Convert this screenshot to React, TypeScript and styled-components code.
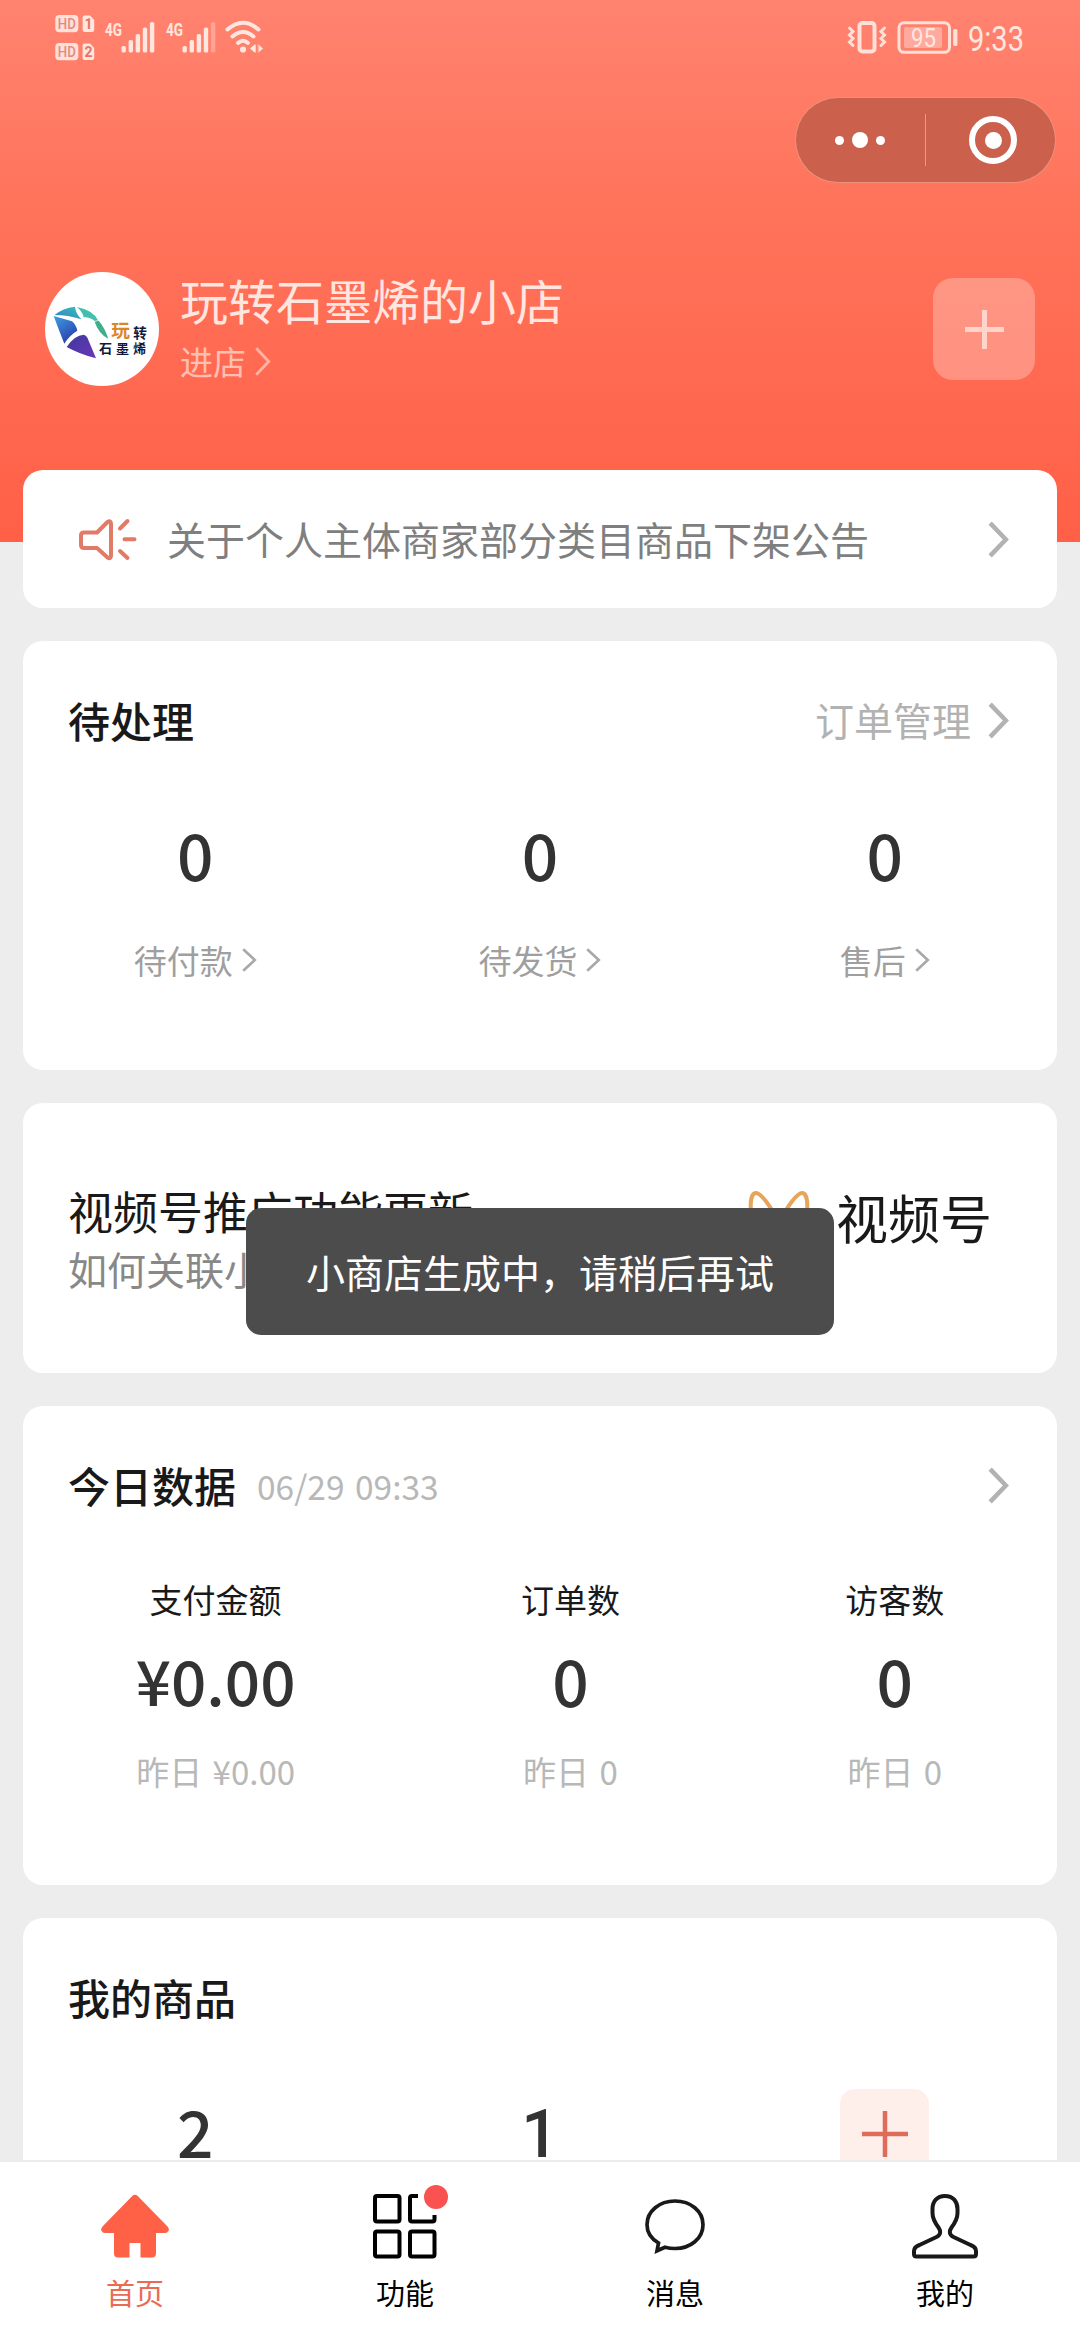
import React from "react";
import styled, { createGlobalStyle } from "styled-components";

const FONT = `"Noto Sans CJK SC", "Noto Sans", sans-serif`;

const GlobalStyle = createGlobalStyle`
  * { box-sizing: border-box; }
  body { margin: 0; background: #ededed; font-family: ${FONT}; }
  svg { display: block; flex: none; }
`;

const Screen = styled.div`
  position: relative;
  display: flex;
  flex-direction: column;
  width: 1080px;
  height: 2340px;
  overflow: hidden;
  background: #ededed;
`;

const Scroll = styled.main`
  flex: 1;
  min-height: 0;
  overflow: hidden;
`;

const Header = styled.header`
  height: 542px;
  background: linear-gradient(180deg, #ff8370 0%, #ff745b 37%, #ff6d55 58%, #ff6047 100%);
`;

const StatusBar = styled.div`
  display: flex;
  justify-content: space-between;
  height: 97px;
  padding: 12px 53px 0 55px;
`;

const CapsuleRow = styled.div`
  display: flex;
  justify-content: flex-end;
  padding-right: 24px;
`;

const Capsule = styled.div`
  display: flex;
  align-items: center;
  width: 261px;
  height: 86px;
  border: 1.5px solid rgba(255, 170, 150, 0.65);
  border-radius: 43px;
  background: #cb604c;
`;

const CapsuleHalf = styled.div`
  display: flex;
  flex: 1;
  align-items: center;
  justify-content: center;
`;

const CapsuleDivider = styled.div`
  width: 1px;
  height: 52px;
  background: rgba(255, 190, 175, 0.6);
`;

const Dots = styled.div`
  display: flex;
  align-items: center;
  gap: 8px;
  margin-right: 2px;
`;

const Dot = styled.i<{ $size: number }>`
  width: ${(p) => p.$size}px;
  height: ${(p) => p.$size}px;
  border-radius: 50%;
  background: #fff;
`;

const Ring = styled.div`
  display: flex;
  align-items: center;
  justify-content: center;
  width: 48px;
  height: 48px;
  margin-left: 5px;
  border: 6.5px solid #fff;
  border-radius: 50%;
`;

const Profile = styled.section`
  display: flex;
  align-items: center;
  height: 114px;
  margin-top: 89px;
  padding: 0 45px;
`;

const ShopText = styled.div`
  flex: 1;
  margin-left: 21px;
`;

const ShopName = styled.h1`
  margin: 0;
  color: #ffe6e0;
  font-size: 48px;
  font-weight: 400;
  line-height: 64px;
`;

const EnterShop = styled.div`
  display: flex;
  align-items: center;
  gap: 9px;
  color: #ffc0b2;
  font-size: 33px;
  line-height: 60px;
`;

const AddButton = styled.button<{ $size: number; $bg: string; $radius: number }>`
  display: flex;
  align-items: center;
  justify-content: center;
  width: ${(p) => p.$size}px;
  height: ${(p) => p.$size}px;
  padding: 0;
  border: 0;
  border-radius: ${(p) => p.$radius}px;
  background: ${(p) => p.$bg};
`;

const Cards = styled.div`
  display: flex;
  flex-direction: column;
  gap: 33px;
  margin-top: -72px;
  padding: 0 23px;
`;

const Card = styled.section<{ $height: number }>`
  flex: none;
  height: ${(p) => p.$height}px;
  border-radius: 20px;
  background: #fff;
`;

const Notice = styled(Card)`
  display: flex;
  align-items: center;
  padding: 0 48px 0 55px;
`;

const NoticeText = styled.div`
  flex: 1;
  margin: -3px 0 0 30px;
  color: #7f7f7f;
  font-size: 39px;
  line-height: 56px;
`;

const CardHead = styled.div`
  display: flex;
  align-items: center;
  height: 157px;
  padding: 0 48px 0 45px;
`;

const CardTitle = styled.h2`
  margin: 0;
  color: #191919;
  font-size: 42px;
  font-weight: 500;
  line-height: 60px;
`;

const DateText = styled.span`
  margin: 2px 0 0 21px;
  color: #b8b8b8;
  font-size: 33.5px;
  line-height: 60px;
  word-spacing: 3px;
`;

const HeadLink = styled.div`
  display: flex;
  align-items: center;
  gap: 17px;
  margin-left: auto;
  padding-top: 2px;
  color: #b2b2b2;
  font-size: 39px;
  line-height: 60px;
`;

const LinkText = styled.span`
  margin-top: -4px;
`;

const Thirds = styled.div<{ $top: number }>`
  display: grid;
  grid-template-columns: repeat(3, 1fr);
  justify-items: center;
  padding-top: ${(p) => p.$top}px;
`;

const Stat = styled.div`
  display: flex;
  flex-direction: column;
  align-items: center;
`;

const Num = styled.div<{ $size?: number; $line?: number; $plain?: boolean }>`
  color: #333;
  font-family: ${(p) => (p.$plain ? "Roboto, sans-serif" : FONT)};
  font-size: ${(p) => p.$size ?? 64}px;
  font-weight: 500;
  line-height: ${(p) => p.$line ?? 76}px;
`;

const StatLink = styled.div`
  display: flex;
  align-items: center;
  gap: 9px;
  margin-top: 49px;
  color: #9f9f9f;
  font-size: 33px;
  line-height: 40px;
`;

const Promo = styled(Card)`
  display: flex;
  align-items: center;
  justify-content: space-between;
  padding: 0 65px 0 45px;
`;

const PromoTitle = styled.div`
  color: #191919;
  font-size: 45px;
  line-height: 60px;
`;

const PromoSub = styled.div`
  color: #888;
  font-size: 39px;
  line-height: 54px;
`;

const Channels = styled.div`
  display: flex;
  align-items: center;
  gap: 26px;
  margin-bottom: 43px;
  color: #191919;
  font-size: 52px;
  line-height: 60px;
`;

const DataRow = styled.div`
  display: flex;
  justify-content: space-around;
  padding-top: 16px;
`;

const StatLabel = styled.div`
  color: #191919;
  font-size: 33px;
  line-height: 40px;
`;

const DataNum = styled(Num)`
  margin-top: 22px;
`;

const Yesterday = styled.div`
  margin-top: 34px;
  color: #b8b8b8;
  font-size: 33px;
  line-height: 40px;
  word-spacing: 3px;
`;

const Toast = styled.div`
  position: absolute;
  top: 1208px;
  left: 246px;
  width: 588px;
  height: 127px;
  border-radius: 15px;
  background: #4c4c4c;
  color: #fff;
  font-size: 39px;
  line-height: 126px;
  text-align: center;
  white-space: nowrap;
`;

const TabBar = styled.nav`
  display: flex;
  flex: none;
  height: 180px;
  border-top: 2px solid #ececec;
  background: #fff;
`;

const Tab = styled.div<{ $active?: boolean }>`
  display: flex;
  flex: 1;
  flex-direction: column;
  align-items: center;
  padding-top: 28px;
  color: ${(p) => (p.$active ? "#ea6a53" : "#000")};
  font-size: 29px;
  line-height: 40px;
  gap: 12px;
`;

const BadgedIcon = styled.div`
  position: relative;
`;

const Badge = styled.i`
  position: absolute;
  top: -5px;
  right: 2px;
  width: 24px;
  height: 24px;
  border-radius: 50%;
  background: #fa5151;
`;

function Chevron({ w = 21, h = 37, stroke = 4.5, color = "#b2b2b2" }) {
  const s = stroke / 2 + 0.5;
  return (
    <svg width={w} height={h} viewBox={`0 0 ${w} ${h}`} fill="none" stroke={color} strokeWidth={stroke}>
      <path d={`M${s - 0.6} ${s - 0.6}L${w - s - 0.4} ${h / 2}L${s - 0.6} ${h - s + 0.6}`} />
    </svg>
  );
}

function Plus({ size, stroke, color }: { size: number; stroke: number; color: string }) {
  const c = size / 2;
  return (
    <svg width={size} height={size} viewBox={`0 0 ${size} ${size}`} stroke={color} strokeWidth={stroke}>
      <path d={`M0 ${c}H${size}M${c} 0V${size}`} />
    </svg>
  );
}

function Signal({ x, weak }: { x: number; weak?: boolean }) {
  const tops = [34, 28, 22, 15.5, 10];
  return (
    <g fill="#ffe6df">
      <text x={x} y={23.5} fontSize={19} fontWeight={700} fontFamily="Roboto, sans-serif" textLength={17} lengthAdjust="spacingAndGlyphs">
        4G
      </text>
      {tops.map((t, i) => (
        <rect key={i} x={x + 16.5 + i * 7.1} y={t} width={4.4} height={40.5 - t} rx={1.6} opacity={weak && i === 4 ? 0.35 : 1} />
      ))}
    </g>
  );
}

function LeftIndicators() {
  return (
    <svg width={220} height={52} viewBox="0 0 220 52" fontFamily="Roboto, sans-serif">
      {[0, 1].map((i) => (
        <g key={i} transform={`translate(0 ${i * 28})`}>
          <rect x={0.3} y={3} width={23} height={17.3} rx={4} fill="#ffe0da" />
          <text x={2.8} y={16.6} fontSize={14} fontWeight={500} fill="#e58b7c" textLength={18} lengthAdjust="spacingAndGlyphs">
            HD
          </text>
          <path d="M29.600 3.500h5.400l4.200 4.600v10a2 2 0 0 1-2 2h-7.600a2 2 0 0 1-2-2v-12.600a2 2 0 0 1 2-2z" fill="#ffe6df" />
          <text x={33.4} y={17} fontSize={14} fontWeight={700} fill="#e8735f" textAnchor="middle">
            {i + 1}
          </text>
        </g>
      ))}
      <Signal x={50} />
      <Signal x={111} weak />
      <g fill="none" stroke="#ffe6df" strokeWidth={4} strokeLinecap="round">
        <path d="M172.500 17.500Q188 4 203.500 17.500" />
        <path d="M177.500 24.500Q188 15.500 198.500 24.500" />
        <path d="M183 31Q188 26.500 193 31" />
      </g>
      <circle cx={188} cy={37.5} r={3.1} fill="#ffe6df" />
      <path d="M195 36.500l4.500-4v8zM208 36.500l-4.500-4v8zM199.500 32.500h1.200v8h-1.200zM202.800 32.500h1.200v8h-1.200z" fill="#ffe6df" />
    </svg>
  );
}

function RightIndicators() {
  return (
    <svg width={180} height={52} viewBox="847 12 180 52" fill="none" stroke="#ffe0d8" fontFamily="Roboto, sans-serif">
      <rect x={859.5} y={23} width={15} height={28.5} rx={3} strokeWidth={4} />
      <path
        d="M849.500 28l3.500 3.500-3.500 3.500 3.500 3.500-3.500 3.500 3.500 3.500M884.500 28l-3.500 3.500 3.500 3.500-3.500 3.500 3.500 3.500-3.500 3.500"
        strokeWidth={3}
        strokeLinecap="round"
      />
      <rect x={899} y={22.8} width={50.5} height={29.5} rx={5} strokeWidth={3} />
      <rect x={904} y={27} width={38} height={21} rx={2} fill="#ffaa9e" stroke="none" />
      <rect x={953.2} y={29} width={4.2} height={17} rx={1.5} fill="#ffe0d8" stroke="none" />
      <text x={911} y={46.5} fontSize={26} fill="#ffe6df" stroke="none" textLength={25} lengthAdjust="spacingAndGlyphs">
        95
      </text>
      <text x={968} y={51.2} fontSize={35.5} fill="#ffe6df" stroke="none" textLength={56} lengthAdjust="spacingAndGlyphs">
        9:33
      </text>
    </svg>
  );
}

function Avatar() {
  return (
    <svg width={114} height={114} viewBox="15 18 342 342" fontFamily={FONT}>
      <defs>
        <linearGradient id="teal" x1="0" x2="1" y1="1" y2="0">
          <stop offset="0" stopColor="#2f7fc0" />
          <stop offset="1" stopColor="#3cc0bd" />
        </linearGradient>
        <linearGradient id="blue" x1="0" x2="0.6" y1="0" y2="1">
          <stop offset="0" stopColor="#3d9fe0" />
          <stop offset="1" stopColor="#2b3fae" />
        </linearGradient>
        <linearGradient id="violet" x1="0" x2="1" y1="0" y2="1">
          <stop offset="0" stopColor="#3f3a9c" />
          <stop offset="1" stopColor="#6a35b8" />
        </linearGradient>
      </defs>
      <circle cx={186} cy={189} r={171} fill="#fff" />
      <path d="M44 147Q68 126 105 122Q107 142 124 160Q84 147 44 147z" fill="url(#teal)" />
      <path d="M111 123Q160 133 174 163L164 165Q148 152 131 154Q128 138 111 123z" fill="#43bfae" />
      <path d="M164 167L176 164Q194 184 205 218Q176 204 164 167z" fill="#3fae8a" />
      <path d="M41 150L96 166Q108 176 112 194Q88 208 73 233Q58 196 41 150z" fill="url(#blue)" />
      <path d="M80 243Q104 207 131 206Q142 210 145 222L168 277Q120 265 80 243z" fill="url(#violet)" />
      <text x={214} y={214} fontSize={56} fontWeight={700} fill="#dc8428">玩</text>
      <text x={280} y={216} fontSize={41} fontWeight={700} fill="#10193c">转</text>
      <text x={177} y={262} fontSize={39} fontWeight={700} fill="#10193c" letterSpacing={12}>石墨烯</text>
    </svg>
  );
}

function Megaphone() {
  return (
    <svg width={59} height={46} viewBox="78 515.500 59 46" fill="none" stroke="#e27a68" strokeWidth={4} strokeLinecap="round" strokeLinejoin="round">
      <path d="M84 532H97L107.500 521.500Q111 519.500 111 523.500V555Q111 559 107.500 557L97 547.500H84Q81 547.500 81 544.500V535Q81 532 84 532z" />
      <path d="M120 528L127.500 520.500M124.500 538.800H134.500M120 550.500L127.500 557.500" />
    </svg>
  );
}

function Butterfly() {
  return (
    <svg width={62} height={54} viewBox="0 0 62 54" fill="none" stroke="#e6a55a" strokeWidth={4} strokeLinejoin="round">
      <path d="M31 33C23 17 13 2.500 7.500 3C1 4 1 26 8 37C13 45 24 43 31 33C38 43 49 45 54 37C61 26 61 4 54.500 3C49 2.500 39 17 31 33z" />
    </svg>
  );
}

function HomeIcon() {
  return (
    <svg width={70} height={70} viewBox="0 0 70 70" fill="#ff6147">
      <path d="M32.500 5.800Q35 3.600 37.500 5.800L67.500 36.500Q70 39.500 68 41.500Q67 43 64.500 43H56V63.500Q56 67.500 52 67.500H40.500V53H29.500V67.500H18Q14 67.500 14 63.500V43H5.500Q3 43 2 41.500Q0 39.500 2.500 36.500z" />
    </svg>
  );
}

function GridIcon() {
  return (
    <svg width={90} height={70} viewBox="0 0 90 70" fill="none" stroke="#000" strokeWidth={4}>
      <rect x={15} y={6} width={24.5} height={25.5} rx={2} />
      <rect x={15} y={41.5} width={24.5} height={25} rx={2} />
      <rect x={50} y={41.5} width={24.5} height={25} rx={2} />
      <path d="M58 6H52Q50 6 50 8V29.500Q50 31.500 52 31.500H72.500Q74.500 31.500 74.500 29.500V25" />
    </svg>
  );
}

function ChatIcon() {
  return (
    <svg width={70} height={70} viewBox="0 0 70 70" fill="none" stroke="#191919" strokeWidth={3.7} strokeLinejoin="miter">
      <path d="M18.500 53C11 48.500 7 42 7 34.700C7 21 19.500 11 35 11S63 21 63 34.700S50.500 58.500 35 58.500C31.500 58.500 28 58 25 57.200L17 60.800z" />
    </svg>
  );
}

function UserIcon() {
  return (
    <svg width={70} height={70} viewBox="0 0 70 70" fill="none" stroke="#191919" strokeWidth={4} strokeLinejoin="round">
      <path d="M35 6C27 6 22.500 11.500 22.500 19V23C22.500 29 25.500 33.500 28.500 37.500C31 41 31 45 26.500 47L9.500 55Q4 57 4 61V64Q4 66.500 6.500 66.500H63.500Q66 66.500 66 64V61Q66 57 60.500 55L43.500 47C39 45 39 41 41.500 37.500C44.500 33.500 47.500 29 47.500 23V19C47.500 11.500 43 6 35 6z" />
    </svg>
  );
}

const pending = ["待付款", "待发货", "售后"];

const today = [
  { label: "支付金额", value: "¥0.00", prev: "昨日 ¥0.00", size: 62 },
  { label: "订单数", value: "0", prev: "昨日 0", size: 64 },
  { label: "访客数", value: "0", prev: "昨日 0", size: 64 },
];

export default function App() {
  return (
    <Screen>
      <GlobalStyle />
      <Scroll>
        <Header>
          <StatusBar>
            <LeftIndicators />
            <RightIndicators />
          </StatusBar>
          <CapsuleRow>
            <Capsule>
              <CapsuleHalf>
                <Dots>
                  <Dot $size={9} />
                  <Dot $size={16} />
                  <Dot $size={9} />
                </Dots>
              </CapsuleHalf>
              <CapsuleDivider />
              <CapsuleHalf>
                <Ring>
                  <Dot $size={17} />
                </Ring>
              </CapsuleHalf>
            </Capsule>
          </CapsuleRow>
          <Profile>
            <Avatar />
            <ShopText>
              <ShopName>玩转石墨烯的小店</ShopName>
              <EnterShop>
                进店
                <Chevron w={16} h={29} stroke={2.8} color="#ffb3a4" />
              </EnterShop>
            </ShopText>
            <AddButton $size={102} $radius={20} $bg="rgba(255, 255, 255, 0.27)">
              <Plus size={39} stroke={5} color="#ffd5cb" />
            </AddButton>
          </Profile>
        </Header>

        <Cards>
          <Notice $height={138}>
            <Megaphone />
            <NoticeText>关于个人主体商家部分类目商品下架公告</NoticeText>
            <Chevron />
          </Notice>

          <Card $height={429}>
            <CardHead>
              <CardTitle>待处理</CardTitle>
              <HeadLink>
                <LinkText>订单管理</LinkText>
                <Chevron />
              </HeadLink>
            </CardHead>
            <Thirds $top={17}>
              {pending.map((label) => (
                <Stat key={label}>
                  <Num>0</Num>
                  <StatLink>
                    {label}
                    <Chevron w={15} h={24} stroke={2.6} color="#a8a8a8" />
                  </StatLink>
                </Stat>
              ))}
            </Thirds>
          </Card>

          <Promo $height={270}>
            <div>
              <PromoTitle>视频号推广功能更新</PromoTitle>
              <PromoSub>如何关联小商店</PromoSub>
            </div>
            <Channels>
              <Butterfly />
              视频号
            </Channels>
          </Promo>

          <Card $height={479}>
            <CardHead>
              <CardTitle>今日数据</CardTitle>
              <DateText>06/29 09:33</DateText>
              <HeadLink>
                <Chevron />
              </HeadLink>
            </CardHead>
            <DataRow>
              {today.map((d) => (
                <Stat key={d.label}>
                  <StatLabel>{d.label}</StatLabel>
                  <DataNum $size={d.size}>{d.value}</DataNum>
                  <Yesterday>{d.prev}</Yesterday>
                </Stat>
              ))}
            </DataRow>
          </Card>

          <Card $height={429}>
            <CardHead>
              <CardTitle>我的商品</CardTitle>
            </CardHead>
            <Thirds $top={14}>
              <Num $line={82}>2</Num>
              <Num $line={91} $size={66} $plain>
                1
              </Num>
              <AddButton $size={89} $radius={15} $bg="#ffefeb">
                <Plus size={46} stroke={4.5} color="#df6c5a" />
              </AddButton>
            </Thirds>
          </Card>
        </Cards>
      </Scroll>

      <TabBar>
        <Tab $active>
          <HomeIcon />
          首页
        </Tab>
        <Tab>
          <BadgedIcon>
            <GridIcon />
            <Badge />
          </BadgedIcon>
          功能
        </Tab>
        <Tab>
          <ChatIcon />
          消息
        </Tab>
        <Tab>
          <UserIcon />
          我的
        </Tab>
      </TabBar>

      <Toast>小商店生成中，请稍后再试</Toast>
    </Screen>
  );
}
